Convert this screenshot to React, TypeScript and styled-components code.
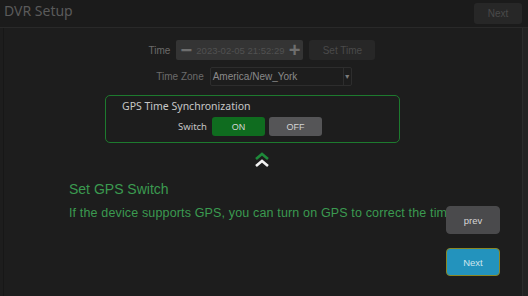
import styled, { createGlobalStyle } from 'styled-components';

const GlobalStyle = createGlobalStyle`
  html, body {
    margin: 0;
    padding: 0;
    background: #1d1d1d;
  }
  * {
    box-sizing: border-box;
  }
`;

const Screen = styled.div`
  width: 528px;
  height: 296px;
  display: flex;
  flex-direction: column;
  background-color: #1d1d1d;
  font-family: "Liberation Sans", Arial, sans-serif;
  overflow: hidden;
`;

const Header = styled.div`
  height: 28px;
  display: flex;
  align-items: center;
  justify-content: space-between;
  padding: 0 6px 0 4px;
  border-bottom: 1px solid #292929;
  background-color: #1b1b1b;
`;

const Title = styled.div`
  color: #5a5a5a;
  font-family: "Noto Sans", sans-serif;
  font-size: 14px;
  margin-top: -6px;
`;

const GhostButton = styled.div<{ $w: number; $h: number }>`
  width: ${p => p.$w}px;
  height: ${p => p.$h}px;
  display: flex;
  align-items: center;
  justify-content: center;
  background-color: #272727;
  border-radius: 3px;
  color: #4a4a4a;
  font-size: 10px;
`;

const Body = styled.div`
  flex: 1;
  display: flex;
  min-height: 0;
`;

const Panel = styled.div`
  flex: 1;
  min-width: 0;
  overflow: hidden;
  margin-left: 3px;
  border-left: 1px solid #171717;
  border-right: 1px solid #2b2b2b;
  display: flex;
  flex-direction: column;
  padding-top: 12px;
`;

const ScrollTrack = styled.div`
  width: 5px;
  background-color: #222222;
`;

const FormRow = styled.div<{ $shift: number }>`
  display: flex;
  align-items: center;
  justify-content: center;
  gap: 6px;
  margin-left: ${p => p.$shift}px;
  margin-bottom: 7px;
`;

const Label = styled.span`
  color: #6b6b6b;
  font-size: 10px;
`;

const TimeBox = styled.div`
  width: 127px;
  height: 20px;
  display: flex;
  align-items: center;
  justify-content: space-between;
  padding: 0 3px 0 4px;
  background-color: #343434;
  border-radius: 2px;
  color: #515151;
  font-size: 9.5px;
`;

const StepGlyph = styled.span`
  color: #6e6e6e;
  font-size: 20px;
  font-weight: bold;
  line-height: 1;
`;

const Select = styled.div`
  width: 142px;
  height: 19px;
  display: flex;
  align-items: center;
  border: 1px solid #2d2d2d;
  border-radius: 2px;
  color: #8a8a8a;
  font-size: 10px;
`;

const SelectValue = styled.span`
  flex: 1;
  padding-left: 2px;
`;

const SelectArrow = styled.span`
  width: 8px;
  height: 100%;
  display: flex;
  align-items: center;
  justify-content: center;
  border-left: 1px solid #2d2d2d;
  color: #7a7a7a;
  font-size: 7px;
`;

const GpsBox = styled.div`
  width: 295px;
  height: 48px;
  margin: 2px 0 0 101px;
  border: 1px solid #1d7a2e;
  border-radius: 5px;
  padding: 3px 0 0 16px;
`;

const GpsTitle = styled.div`
  color: #c8c8c8;
  font-family: "Noto Sans", sans-serif;
  font-size: 10.5px;
  line-height: 14px;
`;

const SwitchRow = styled.div`
  display: flex;
  align-items: center;
  margin: 4px 0 0 56px;
`;

const SwitchLabel = styled.span`
  color: #c4c4c4;
  font-family: "Noto Sans", sans-serif;
  font-size: 9.5px;
  margin-right: 5px;
`;

const Toggle = styled.div<{ $on?: boolean }>`
  width: 53px;
  height: 19px;
  margin-right: 4px;
  display: flex;
  align-items: center;
  justify-content: center;
  border-radius: 3px;
  background-color: ${p => (p.$on ? '#0f6c1f' : '#555557')};
  color: #d4d4d4;
  font-size: 9px;
`;

const Chevron = styled.svg`
  align-self: center;
  margin: 9px 0 0 -2px;
`;

const Guide = styled.div`
  display: flex;
  margin-top: 11px;
`;

const GuideText = styled.div`
  flex: 1;
  min-width: 0;
  overflow: hidden;
  white-space: nowrap;
  padding-left: 65px;
  padding-top: 1px;
  color: #3b9a50;
`;

const GuideTitle = styled.div`
  font-size: 14px;
  line-height: 18px;
`;

const GuideBody = styled.div`
  font-size: 12.5px;
  line-height: 18px;
  letter-spacing: 0.15px;
  margin-top: 6px;
`;

const GuideButtons = styled.div`
  width: 54px;
  margin: 27px 22px 0 0;
  display: flex;
  flex-direction: column;
  gap: 14px;
`;

const GuideButton = styled.div<{ $primary?: boolean }>`
  height: 28px;
  display: flex;
  align-items: center;
  justify-content: center;
  border-radius: 4px;
  border: 1px solid ${p => (p.$primary ? '#8a8724' : '#4a4a4c')};
  background-color: ${p => (p.$primary ? '#2393bd' : '#4a4a4c')};
  color: ${p => (p.$primary ? '#cde6ee' : '#d6d6d6')};
  font-size: 9.5px;
`;

export default function App() {
  return (
    <>
      <GlobalStyle />
      <Screen>
        <Header>
          <Title>DVR Setup</Title>
          <GhostButton $w={48} $h={21}>Next</GhostButton>
        </Header>
        <Body>
          <Panel>
            <FormRow $shift={-2}>
              <Label>Time</Label>
              <TimeBox>
                <StepGlyph>−</StepGlyph>
                <span>2023-02-05 21:52:29</span>
                <StepGlyph>+</StepGlyph>
              </TimeBox>
              <GhostButton $w={66} $h={20}>Set Time</GhostButton>
            </FormRow>
            <FormRow $shift={-18}>
              <Label>Time Zone</Label>
              <Select>
                <SelectValue>America/New_York</SelectValue>
                <SelectArrow>▼</SelectArrow>
              </Select>
            </FormRow>
            <GpsBox>
              <GpsTitle>GPS Time Synchronization</GpsTitle>
              <SwitchRow>
                <SwitchLabel>Switch</SwitchLabel>
                <Toggle $on>ON</Toggle>
                <Toggle>OFF</Toggle>
              </SwitchRow>
            </GpsBox>
            <Chevron width="16" height="16" viewBox="0 0 16 16">
              <path d="M2 7 L8 2 L14 7" fill="none" stroke="#1e8a3a" strokeWidth="2.6" />
              <path d="M2 14 L8 9 L14 14" fill="none" stroke="#f2f2f2" strokeWidth="2.6" />
            </Chevron>
            <Guide>
              <GuideText>
                <GuideTitle>Set GPS Switch</GuideTitle>
                <GuideBody>If the device supports GPS, you can turn on GPS to correct the time.</GuideBody>
              </GuideText>
              <GuideButtons>
                <GuideButton>prev</GuideButton>
                <GuideButton $primary>Next</GuideButton>
              </GuideButtons>
            </Guide>
          </Panel>
          <ScrollTrack />
        </Body>
      </Screen>
    </>
  );
}
